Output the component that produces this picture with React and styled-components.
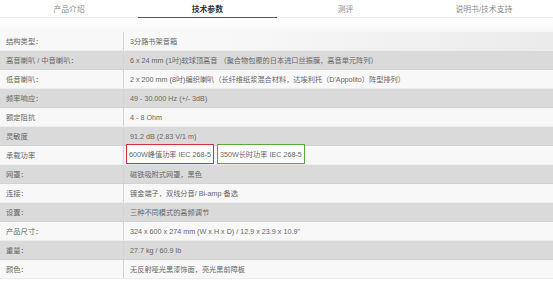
import React from 'react';
import styled, { createGlobalStyle } from 'styled-components';

const tabs = ['产品介绍', '技术参数', '测评', '说明书/技术支持'];

const specs = [
	['结构类型：', '3分路书架音箱'],
	['高音喇叭 / 中音喇叭：', '6 x 24 mm (1吋)软球顶高音 （聚合物包覆的日本进口丝振膜，高音单元阵列）'],
	['低音喇叭：', '2 x 200 mm (8吋)编织喇叭（长纤维纸浆混合材料，达埃利托（D\'Appolito）阵型排列）'],
	['频率响应：', '49 - 30.000 Hz (+/- 3dB)'],
	['额定阻抗', '4 - 8 Ohm'],
	['灵敏度', '91.2 dB (2.83 V/1 m)'],
	['承载功率', 'power'],
	['网罩：', '磁铁吸附式网罩，黑色'],
	['连接：', '镀金端子，双线分音/ Bi-amp 备选'],
	['设置：', '三种不同模式的高频调节'],
	['产品尺寸：', '324 x 600 x 274 mm (W x H x D) / 12.9 x 23.9 x 10.9"'],
	['重量：', '27.7 kg / 60.9 lb'],
	['颜色：', '无反射哑光黑漆饰面，亮光黑前障板'],
];

function App() {
	return (
		<>
			<GlobalStyle />
			<Page>
				<TabBar>
					{tabs.map((t, i) => (
						<Tab key={t} $active={i === 1}>{t}</Tab>
					))}
				</TabBar>
				<Spacer />
				<SpecTable>
					{specs.map(([label, value], i) => (
						<SpecRow key={label} $even={i % 2 === 1} $first={i === 0}>
							<Label>{label}</Label>
							<Value>
								{value === 'power' ? (
									<>
										<Marked $color="#d2323c">600W峰值功率 IEC 268-5</Marked>
										<Marked $color="#5da83e">350W长时功率 IEC 268-5</Marked>
									</>
								) : value}
							</Value>
						</SpecRow>
					))}
				</SpecTable>
			</Page>
		</>
	);
}

const GlobalStyle = createGlobalStyle`
	body {
		margin: 0;
		background: #fff;
		font-family: "Liberation Sans", "Noto Sans CJK SC", sans-serif;
	}
`

const Page = styled.div`
	width: 553px;
	height: 281px;
	overflow: hidden;
`

const TabBar = styled.div`
	display: grid;
	grid-template-columns: repeat(4, 1fr);
	height: 17px;
	border-bottom: 1px solid #ececec;
`

const Tab = styled.div`
	display: flex;
	justify-content: center;
	align-items: center;
	font-size: 7.8px;
	color: ${p => p.$active ? '#333' : '#8a8a8a'};
	font-weight: ${p => p.$active ? 700 : 400};
	border-bottom: ${p => p.$active ? '1px solid #555' : 'none'};
	margin-bottom: ${p => p.$active ? '-1px' : '0'};
`

const Spacer = styled.div`
	height: 14px;
	background: linear-gradient(#fff, #f7f7f7);
`

const SpecTable = styled.div`
	display: flex;
	flex-direction: column;
`

const SpecRow = styled.div`
	display: grid;
	grid-template-columns: 124px 1fr;
	height: 19px;
	box-sizing: border-box;
	border-bottom: 1px solid ${p => p.$even ? '#d2d2d2' : '#ececec'};
	background: ${p => p.$first
		? 'linear-gradient(90deg, #f8f8f8 40%, #ebebeb)'
		: p.$even ? '#dadada' : '#f8f8f8'};
`

const Label = styled.div`
	display: flex;
	align-items: center;
	padding-left: 6px;
	font-size: 7.3px;
	color: #666;
	border-right: 1px solid #d4d4d4;
`

const Value = styled.div`
	display: flex;
	align-items: center;
	gap: 3px;
	padding-left: 6px;
	font-size: 7.2px;
	color: #666;
	white-space: nowrap;
`

const Marked = styled.span`
	display: flex;
	align-items: center;
	height: 20px;
	margin: -3px 0 0 -4px;
	padding: 0 2px;
	box-sizing: border-box;
	border: 1.5px solid ${p => p.$color};
	background: #fff;
	& + & {
		margin-left: 0;
	}
`

export default App;
